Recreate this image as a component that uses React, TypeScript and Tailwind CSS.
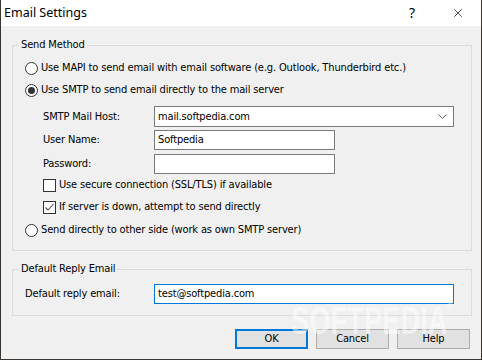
import { X } from "lucide-react"

const ui = { fontFamily: '"DejaVu Sans Condensed", "DejaVu Sans", sans-serif' }

function Radio({ checked, label }: { checked?: boolean; label: string }) {
  return (
    <div className="h-[22px] flex items-center pl-[12px]">
      <div className="w-[13px] h-[13px] rounded-full border border-[#333333] bg-white flex items-center justify-center shrink-0">
        {checked && <div className="w-[7px] h-[7px] rounded-full bg-[#333333]" />}
      </div>
      <span className="ml-[3px]">{label}</span>
    </div>
  )
}

function Check({ checked, label }: { checked?: boolean; label: string }) {
  return (
    <div className="h-[22px] flex items-center pl-[30px]">
      <div className="w-[13px] h-[13px] border border-[#333333] bg-white flex items-center justify-center shrink-0">
        {checked && (
          <svg width="11" height="11" viewBox="0 0 11 11">
            <polyline points="1.5,5.5 4,8 9.5,2" fill="none" stroke="#555555" strokeWidth="1.1" />
          </svg>
        )}
      </div>
      <span className="ml-[3px]">{label}</span>
    </div>
  )
}

export default function App() {
  return (
    <div className="w-[482px] h-[360px] bg-[#3a3530] px-px pb-px overflow-hidden" style={ui}>
      <div className="w-full h-full flex flex-col bg-[#f0f0f0] text-[11px] leading-[14px] tracking-[-0.15px] text-black">
        {/* Title bar */}
        <div className="h-[26px] bg-white flex items-center shrink-0 tracking-normal">
          <span
            className="pl-[3px] text-[12.5px] flex-1"
            style={{ fontFamily: '"Noto Sans", "Open Sans", sans-serif' }}
          >
            Email Settings
          </span>
          <span
            className="w-[46px] text-center text-[14px]"
            style={{ fontFamily: '"Noto Sans", sans-serif' }}
          >
            ?
          </span>
          <div className="w-[46px] flex justify-center pr-[1px]">
            <X className="w-[14px] h-[14px]" strokeWidth={1.2} />
          </div>
        </div>

        {/* Body */}
        <div className="flex-1 flex flex-col pl-[11px] pr-[9px] pt-[12px] relative overflow-hidden">
          <fieldset className="border border-[#dcdcdc] pt-[5px] pb-[9px]">
            <legend className="ml-[6px] px-[2px] leading-[14px]">Send Method</legend>
            <Radio label="Use MAPI to send email with email software (e.g. Outlook, Thunderbird etc.)" />
            <Radio checked label="Use SMTP to send email directly to the mail server" />

            <div className="flex items-center pl-[30px] mt-[5px] h-[21px]">
              <span className="w-[111px]">SMTP Mail Host:</span>
              <div className="w-[300px] h-[21px] bg-white border border-[#7a7a7a] flex items-center pl-[3px] pr-[6px]">
                <span className="flex-1">mail.softpedia.com</span>
                <svg width="9" height="5" viewBox="0 0 9 5">
                  <polyline points="0.5,0.5 4.5,4.5 8.5,0.5" fill="none" stroke="#606060" strokeWidth="1" />
                </svg>
              </div>
            </div>
            <div className="flex items-center pl-[30px] mt-[3px] h-[20px]">
              <span className="w-[111px]">User Name:</span>
              <div className="w-[181px] h-[20px] bg-white border border-[#7a7a7a] flex items-center pl-[3px]">
                Softpedia
              </div>
            </div>
            <div className="flex items-center pl-[30px] mt-[4px] h-[20px]">
              <span className="w-[111px]">Password:</span>
              <div className="w-[181px] h-[20px] bg-white border border-[#7a7a7a]" />
            </div>
            <Check label="Use secure connection (SSL/TLS) if available" />
            <Check checked label="If server is down, attempt to send directly" />
            <div className="mt-px">
              <Radio label="Send directly to other side (work as own SMTP server)" />
            </div>
          </fieldset>

          <fieldset className="border border-[#dcdcdc] mt-[11px] pt-[8px] pb-[11px]">
            <legend className="ml-[6px] px-[2px] leading-[14px]">Default Reply Email</legend>
            <div className="flex items-center pl-[12px]">
              <span className="w-[129px]">Default reply email:</span>
              <div className="w-[300px] h-[20px] bg-white border border-[#0078d7] flex items-center pl-[3px]">
                test@softpedia.com
              </div>
            </div>
          </fieldset>

          <div className="flex justify-end gap-[8px] pr-[2px] mt-[13px]">
            <button className="w-[73px] h-[20px] bg-[#e1e1e1] border-2 border-[#0078d7]">OK</button>
            <button className="w-[73px] h-[20px] bg-[#e1e1e1] border border-[#adadad]">Cancel</button>
            <button className="w-[73px] h-[20px] bg-[#e1e1e1] border border-[#adadad]">Help</button>
          </div>

          {/* watermark */}
          <div
            className="absolute left-[290px] top-[276px] text-[38px] font-bold text-white/50 leading-none tracking-normal pointer-events-none origin-left scale-x-[0.72]"
            style={{ fontFamily: '"Liberation Sans", sans-serif' }}
          >
            SOFTPEDIA<span className="text-[10px] align-top">®</span>
          </div>
        </div>
      </div>
    </div>
  )
}
